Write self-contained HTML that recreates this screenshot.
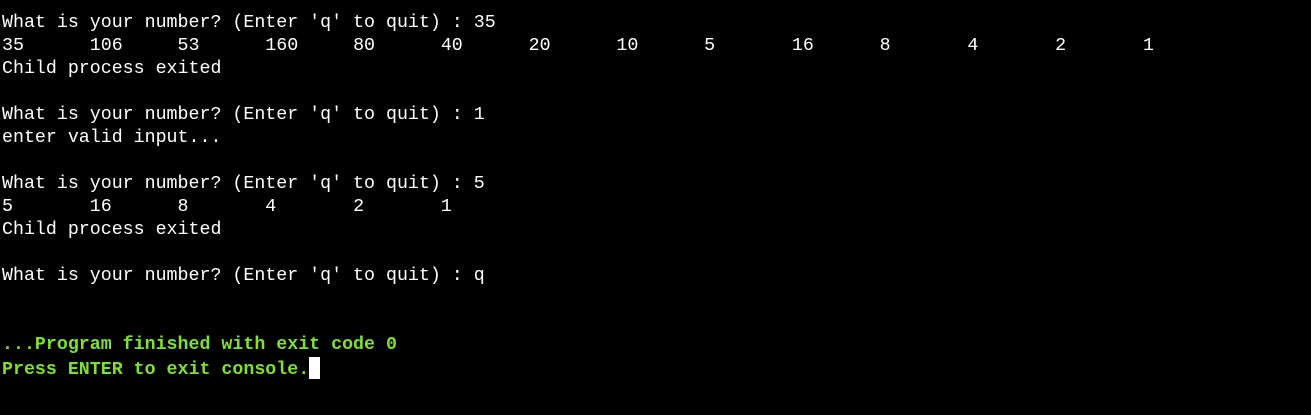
<!DOCTYPE html>
<html><head><style>
html,body{margin:0;padding:0;background:#000;width:1311px;height:415px;overflow:hidden}
pre{margin:0;position:absolute;left:2px;top:12px;font-family:"Liberation Mono",monospace;font-size:18.3px;line-height:23px;color:#fff;tab-size:8}
.g{color:#7fe030;font-weight:bold}
.c{display:inline-block;width:11px;height:22px;background:#fff;vertical-align:-5px}
</style></head><body>
<pre>What is your number? (Enter 'q' to quit) : 35
35	106	53	160	80	40	20	10	5	16	8	4	2	1
Child process exited

What is your number? (Enter 'q' to quit) : 1
enter valid input...

What is your number? (Enter 'q' to quit) : 5
5	16	8	4	2	1
Child process exited

What is your number? (Enter 'q' to quit) : q


<span class="g">...Program finished with exit code 0</span>
<span class="g">Press ENTER to exit console.</span><span class="c"></span></pre>
</body></html>
